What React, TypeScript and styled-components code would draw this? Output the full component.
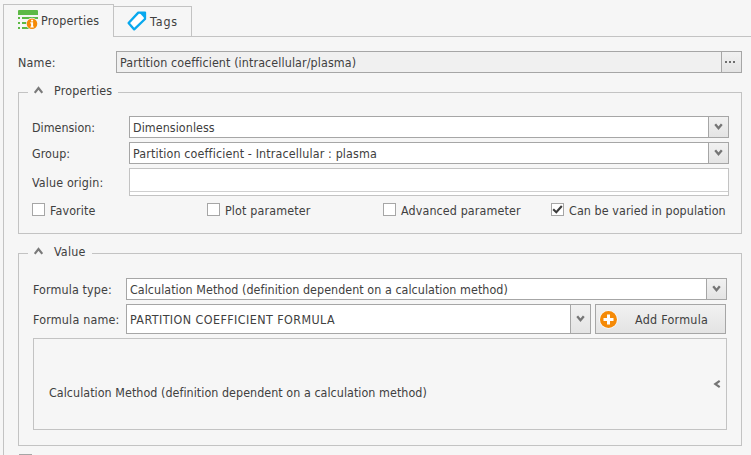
import React from "react";
import styled, { createGlobalStyle } from "styled-components";

const GlobalStyle = createGlobalStyle`
  html, body { margin: 0; padding: 0; background: #f6f6f6; overflow: hidden; }
  *, *::before, *::after { box-sizing: border-box; }
  button, fieldset, legend { font: inherit; color: inherit; letter-spacing: inherit; }
`;

const edge = "#a6a6a6";
const soft = "#c3c3c3";

const Page = styled.main`
  width: 751px;
  height: 455px;
  overflow: hidden;
  background: #f6f6f6;
  color: #404040;
  font: 12.4px/14px "DejaVu Sans Condensed", "DejaVu Sans", sans-serif;
  display: flex;
  flex-direction: column;
  padding: 4px 0 0 3px;
`;

const Text = styled.span<{ $track?: number }>`
  white-space: nowrap;
  letter-spacing: ${(p) => p.$track ?? 0.15}px;
`;

const Tabs = styled.nav`
  display: flex;
  align-items: flex-end;
  height: 33px;
`;

const Tab = styled.div<{ $active?: boolean }>`
  display: flex;
  align-items: flex-start;
  border: 1px solid ${soft};
  ${(p) => (p.$active ? "border-bottom: 0;" : "border-left: 0;")}
  width: ${(p) => (p.$active ? 111 : 78)}px;
  height: ${(p) => (p.$active ? 33 : 31)}px;
  padding: ${(p) => (p.$active ? "5px 0 0 14px" : "4px 0 0 13px")};
  gap: 3px;

  ${Text} { margin-top: 4px; }
`;

const TabLine = styled.div`
  flex: 1;
  border-bottom: 1px solid ${soft};
`;

const Panel = styled.section`
  flex: 1;
  border-left: 1px solid ${soft};
  padding: 14px 9px 0 14px;
  display: flex;
  flex-direction: column;
`;

const Row = styled.div<{ $gap?: number }>`
  display: flex;
  align-items: center;
  margin-top: ${(p) => p.$gap ?? 0}px;
`;

const Label = styled(Text)<{ $width: number }>`
  flex: 0 0 ${(p) => p.$width}px;
  padding-top: 2px;
`;

const Field = styled.div<{ $height?: number; $muted?: boolean }>`
  flex: 1;
  display: flex;
  align-items: center;
  justify-content: space-between;
  height: ${(p) => p.$height ?? 22}px;
  border: 1px solid ${edge};
  background: ${(p) => (p.$muted ? "#f0f0f0" : "#fff")};
  padding-left: 3px;

  > ${Text} { padding-top: 2px; }
`;

const FieldButton = styled.button<{ $shift?: number }>`
  align-self: stretch;
  width: 20px;
  padding: 0 ${(p) => p.$shift ?? 0}px 0 0;
  border: 0;
  border-left: 1px solid ${edge};
  background: linear-gradient(#f1f1f1, #e4e4e4);
  display: flex;
  align-items: center;
  justify-content: center;
`;

const Group = styled.fieldset<{ $top: number; $height: number }>`
  margin: ${(p) => p.$top}px 0 0;
  min-width: 0;
  height: ${(p) => p.$height}px;
  border: 1px solid ${soft};
  padding: 0;
`;

const GroupTitle = styled.legend<{ $width: number }>`
  margin-left: 9px;
  padding: 0 0 5px 6px;
  width: ${(p) => p.$width}px;
  height: 17px;
  display: flex;
  align-items: center;
  gap: 11px;

  ${Text} { margin-top: 1px; }
`;

const GroupBody = styled.div<{ $pad: string }>`
  padding: ${(p) => p.$pad};
`;

const OriginGrid = styled.div`
  flex: 1;
  height: 28px;
  border: 1px solid ${soft};
  background: #fff;
  padding-top: 22px;

  &::after { content: ""; display: block; border-top: 1px solid #cfcfcf; }
`;

const Checks = styled.div`
  display: grid;
  grid-template-columns: 175px 176px 168px auto;
  margin-top: 7px;
`;

const Check = styled.label`
  display: flex;
  align-items: flex-start;
  gap: 5px;
  height: 14px;

  > ${Text} { padding-top: 1px; }
`;

const Box = styled.span`
  width: 13px;
  height: 13px;
  flex: none;
  border: 1px solid ${edge};
  background: #fff;
  display: flex;
  align-items: center;
  justify-content: center;
`;

const AddButton = styled.button`
  width: 131px;
  height: 30px;
  margin: 0 1px 0 4px;
  padding: 0 0 0 3px;
  border: 1px solid ${edge};
  background: linear-gradient(#f1f1f1, #e3e3e3);
  display: flex;
  align-items: center;
  gap: 17px;

  ${Text} { padding-top: 2px; }
`;

const Preview = styled.div`
  height: 92px;
  margin-top: 4px;
  border: 1px solid ${soft};
  padding: 0 5px 0 15px;
  display: flex;
  align-items: center;
  justify-content: space-between;

  ${Text} { margin-top: 17px; }
`;

const NextOption = styled.div`
  margin: 8px 0 0 1px;
`;

const Svg = styled.svg`
  display: block;
  flex: none;
`;

const Down = () => (
  <Svg width="9" height="8" viewBox="0 0 9 8">
    <path d="M1.2 1.2 4.5 5.2 7.8 1.2" fill="none" stroke="#757575" strokeWidth="2.3" />
  </Svg>
);

const Up = () => (
  <Svg width="9" height="8" viewBox="0 0 9 8">
    <path d="M.7 6.8 4.5 2 8.3 6.8" fill="none" stroke="#7a7a7a" strokeWidth="2.2" />
  </Svg>
);

const Left = () => (
  <Svg width="8" height="8" viewBox="0 0 8 8">
    <path d="M6.7.9 2.3 4 6.7 7.1" fill="none" stroke="#757575" strokeWidth="2.2" />
  </Svg>
);

const Dots = () => (
  <Svg width="10" height="4" viewBox="0 0 10 4">
    <path d="M0 1h2v2H0zM4 1h2v2H4zM8 1h2v2H8z" fill="#6e6e6e" />
  </Svg>
);

const Tick = () => (
  <Svg width="11" height="11" viewBox="0 0 11 11">
    <path d="M1.2 5.2 4.3 8.2 9.8 2" fill="none" stroke="#3c3c3c" strokeWidth="2.1" />
  </Svg>
);

const ListInfo = () => (
  <Svg width="20" height="20" viewBox="0 0 20 20">
    <path
      d="M1 0h18a1 1 0 0 1 1 1v4H0V1a1 1 0 0 1 1-1zM0 7h2v2H0zM4 7h16v2H4zM0 12h2v2H0zM4 12h8v2H4zM0 17h2v2H0zM4 17h8v2H4z"
      fill="#5db946"
    />
    <circle cx="14" cy="13.7" r="6" fill="#f6f6f6" />
    <circle cx="14" cy="13.7" r="5.3" fill="#f58a07" />
    <path d="M13.1 9.8h2v1.6h-2zM12.3 12.2h2.8v4.2h.7v1.2h-3.5v-1.2h.8v-3h-.8z" fill="#fff" />
  </Svg>
);

const TagIcon = () => (
  <Svg width="20" height="21" viewBox="0 0 20 21">
    <path d="M11.3 1.6 18 1.6 18 8 7.2 18.4 1.6 12Z" fill="#fff" stroke="#08a8ee" strokeWidth="2.3" strokeLinejoin="round" />
    <path d="M12.2 1.5h6v6.5Z" fill="#08a8ee" />
  </Svg>
);

const Plus = () => (
  <Svg width="19" height="19" viewBox="0 0 19 19">
    <circle cx="9.5" cy="9.5" r="9.3" fill="#f8fbff" />
    <circle cx="9.5" cy="9.5" r="8.5" fill="#f58a07" />
    <path d="M8 4.5h3V8h3.5v3H11v3.5H8V11H4.5V8H8z" fill="#fff" />
  </Svg>
);

const Select = ({ value, height, track }: { value: string; height?: number; track: number }) => (
  <Field $height={height}>
    <Text $track={track}>{value}</Text>
    <FieldButton aria-label="Open list"><Down /></FieldButton>
  </Field>
);

const options = [
  { label: "Favorite", on: false, track: 0.15 },
  { label: "Plot parameter", on: false, track: 0.14 },
  { label: "Advanced parameter", on: false, track: 0.12 },
  { label: "Can be varied in population", on: true, track: 0.09 },
];

export default function App() {
  return (
    <>
      <GlobalStyle />
      <Page>
        <Tabs>
          <Tab $active><ListInfo /><Text $track={0.2}>Properties</Text></Tab>
          <Tab><TagIcon /><Text $track={0.9}>Tags</Text></Tab>
          <TabLine />
        </Tabs>
        <Panel>
          <Row>
            <Label $width={98} $track={0.2}>Name:</Label>
            <Field $muted>
              <Text $track={0.11}>Partition coefficient (intracellular/plasma)</Text>
              <FieldButton $shift={3} aria-label="Rename"><Dots /></FieldButton>
            </Field>
          </Row>

          <Group $top={11} $height={150}>
            <GroupTitle $width={90}><Up /><Text $track={0.2}>Properties</Text></GroupTitle>
            <GroupBody $pad="15px 12px 0 13px">
              <Row>
                <Label $width={97} $track={0}>Dimension:</Label>
                <Select value="Dimensionless" track={0.07} />
              </Row>
              <Row $gap={4}>
                <Label $width={97} $track={0.08}>Group:</Label>
                <Select value="Partition coefficient - Intracellular : plasma" track={0.14} />
              </Row>
              <Row $gap={4}>
                <Label $width={97} $track={0.14}>Value origin:</Label>
                <OriginGrid />
              </Row>
              <Checks>
                {options.map((o) => (
                  <Check key={o.label}>
                    <Box>{o.on && <Tick />}</Box>
                    <Text $track={o.track}>{o.label}</Text>
                  </Check>
                ))}
              </Checks>
            </GroupBody>
          </Group>

          <Group $top={11} $height={201}>
            <GroupTitle $width={64}><Up /><Text $track={0.2}>Value</Text></GroupTitle>
            <GroupBody $pad="16px 14px 0 14px">
              <Row>
                <Label $width={93} $track={0.13}>Formula type:</Label>
                <Select value="Calculation Method (definition dependent on a calculation method)" track={0.05} />
              </Row>
              <Row $gap={4}>
                <Label $width={93} $track={0.2}>Formula name:</Label>
                <Select value="PARTITION COEFFICIENT FORMULA" height={30} track={0.43} />
                <AddButton><Plus /><Text $track={0.28}>Add Formula</Text></AddButton>
              </Row>
              <Preview>
                <Text $track={0.05}>Calculation Method (definition dependent on a calculation method)</Text>
                <Left />
              </Preview>
            </GroupBody>
          </Group>
          <NextOption><Box /></NextOption>
        </Panel>
      </Page>
    </>
  );
}
